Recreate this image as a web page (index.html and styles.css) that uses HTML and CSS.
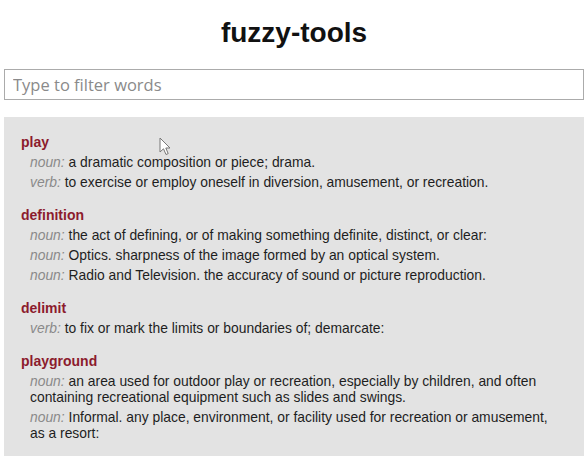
FILE: index.html
```html
<!DOCTYPE html>
<html lang="en">
<head>
    <meta charset="UTF-8">
    <meta name="viewport" content="width=device-width, initial-scale=1.0">
    <title>fuzzy-tools</title>
    <link rel="stylesheet" href="styles.css">
</head>
<body>
<div class="container">
    <h1>fuzzy-tools</h1>
    <input class="filter" id="filter" type="text" placeholder="Type to filter words">
    <div class="results" id="results">
        <div class="entry">
            <div class="word">play</div>
            <div class="def"><span class="pos">noun:</span> a dramatic composition or piece; drama.</div>
            <div class="def"><span class="pos">verb:</span> to exercise or employ oneself in diversion, amusement, or recreation.</div>
        </div>
        <div class="entry">
            <div class="word">definition</div>
            <div class="def"><span class="pos">noun:</span> the act of defining, or of making something definite, distinct, or clear:</div>
            <div class="def"><span class="pos">noun:</span> Optics. sharpness of the image formed by an optical system.</div>
            <div class="def"><span class="pos">noun:</span> Radio and Television. the accuracy of sound or picture reproduction.</div>
        </div>
        <div class="entry">
            <div class="word">delimit</div>
            <div class="def"><span class="pos">verb:</span> to fix or mark the limits or boundaries of; demarcate:</div>
        </div>
        <div class="entry">
            <div class="word">playground</div>
            <div class="def"><span class="pos">noun:</span> an area used for outdoor play or recreation, especially by children, and often containing recreational equipment such as slides and swings.</div>
            <div class="def"><span class="pos">noun:</span> Informal. any place, environment, or facility used for recreation or amusement, as a resort:</div>
        </div>
        <svg class="pointer" width="13" height="19" viewBox="0 0 13 19">
            <path d="M1 1 L1 15 L4.5 11.8 L7 17.5 L9.2 16.6 L6.8 11 L11 11 Z" fill="#fff" stroke="#777" stroke-width="1"/>
        </svg>
    </div>
</div>
<script>
    const input = document.getElementById('filter');
    input.addEventListener('input', () => {
        const q = input.value.trim().toLowerCase();
        document.querySelectorAll('.entry').forEach(entry => {
            const word = entry.querySelector('.word').innerText.toLowerCase();
            entry.style.display = !q || word.includes(q) ? '' : 'none';
        });
    });
</script>
</body>
</html>
```

FILE: styles.css
```css
body { margin:0; padding:0; background:#fff; font-family:"Liberation Sans", Arial, sans-serif; color:#222; }
.container { margin:0 4px; }
h1 { font-size:28px; line-height:32px; font-weight:bold; text-align:center; color:#111; margin:17px 0 20px; }
.filter { display:block; width:100%; height:31px; box-sizing:border-box; margin:0; padding:0 8px; border:1px solid #ababab; font-family:"Open Sans", sans-serif; font-size:16.5px; color:#333; outline:none; }
.filter::placeholder { color:#8a8a8a; }
.results { position:relative; margin-top:17px; background:#e3e3e3; padding:17px 20px 15px 17px; }
.entry + .entry { margin-top:17px; }
.word { font-size:14px; line-height:16px; font-weight:bold; color:#8c1b2d; }
.def { font-size:13.86px; line-height:16px; margin-top:4px; padding-left:9px; color:#1e1e1e; }
.pos { font-style:italic; color:#8a8a8a; }
.pointer { position:absolute; left:155px; top:20px; }
```
